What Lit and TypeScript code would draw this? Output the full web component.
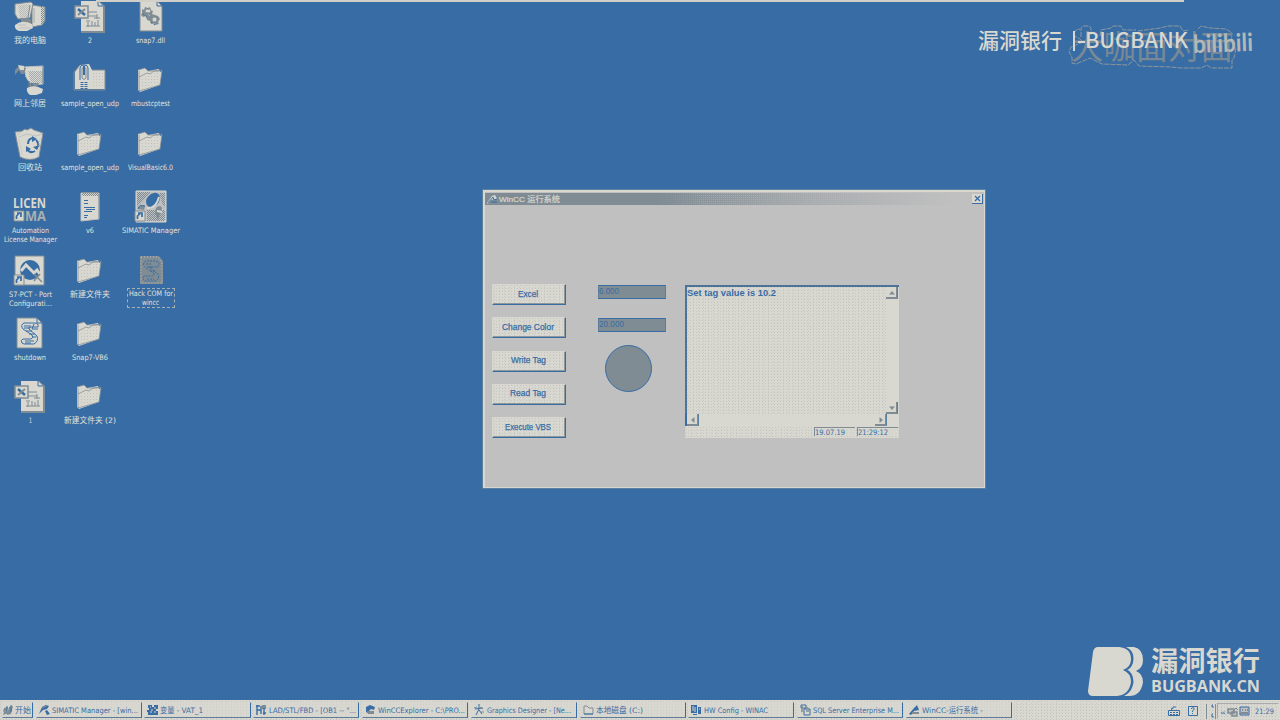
import { LitElement, html, svg, css } from "lit";
import { customElement, property } from "lit/decorators.js";

/* One line of text set to an exact measure. */
const line = (s: string, w: number, h = 9, base = 7, cls = "") => html`<svg class="line ${cls}" width=${w} height=${h}><text x="0" y=${base} textLength=${w} lengthAdjust="spacingAndGlyphs">${s}</text></svg>`;

const B = "#386ca4", G = "#808c94", S = "#c0c0c0", L = "#d8d8d0";

const defs = svg`<defs><pattern id="dots" width="3" height="3" patternUnits="userSpaceOnUse"><rect x="1" y="1" width="1" height="1" fill=${S}/></pattern>
<pattern id="mesh" width="2" height="2" patternUnits="userSpaceOnUse"><path d="M0 0h1v1h-1zM1 1h1v1h-1z" fill=${G}/></pattern></defs>`;

const shortcut = svg`<path d="M0 21h10v10H0z" fill=${L} stroke=${G}/><path d="M2.500 29v-3l3-3M3 23h4v4" fill="none" stroke=${B} stroke-width="1.700"/>`;

const sheet = svg`<path d="M7 1h18l6 5v27H7z" fill=${G}/><path d="M7 1h17l5 5v25H7z" fill=${L}/><path d="M24 1v5h5" fill="none" stroke=${B}/><path d="M13 12h10M13 16h10M23 14v5M20 18h6M12 21h4M14 22v5M12 26h14M18 21v5M21 22v4M24 20v6" stroke=${G} stroke-width="1"/><rect x="1" y="6" width="13" height="12" fill=${L} stroke=${G} stroke-width="1.500"/><path d="M4 9l7 6" stroke=${B} stroke-width="2.500"/><path d="M11 9l-7 6" stroke=${G} stroke-width="2"/>`;

const scroll = svg`<path d="M3 1h20l5 5v25H3z" fill=${L} stroke=${G}/><path d="M23 1v5h5" fill="none" stroke=${B}/><path d="M20 6H10q-4 2-1 6l9 6q2 3-1 4H9q-3 1-1 4l2 1h10q5-3 3-8l-8-7q-1-2 2-2h7q1-4-4-4z" fill=${L} stroke=${B}/><path d="M10 9h7M10 11h6M12 14h6M15 17h6M18 20h4M11 24h9M11 26h6M20 7l-2 5h6" stroke=${B} fill="none"/>`;

const icons: Record<string, unknown> = {
  computer: svg`<path d="M18 5l13 2v14l-3 4-10 2z" fill=${L} stroke=${G}/><path d="M27 7l4 1v13l-4 4z" fill="url(#mesh)"/><path d="M20 8v15" stroke=${S} stroke-width="2"/><path d="M1 4l16-2 2 2-3 14-12 1-3-5z" fill=${L} stroke=${G}/><path d="M4 5l12-1-1 13-9 1z" fill="url(#mesh)" opacity=".4"/><path d="M16 5l-2 13-8 1" stroke=${G} fill="none"/><path d="M7 19h10v5H7z" fill=${G}/><path d="M1 25q7-6 17-1l1 4-6 3H5q-5-2-4-6z" fill=${L}/><path d="M4 25h8M5 28h11" stroke=${S}/>`,
  network: svg`<path d="M10 4l19-1v18l-12 1-5-8z" fill=${L} stroke=${S}/><path d="M14 8h15v12l-12 1z" fill="url(#mesh)" opacity=".6"/><path d="M29 3v18" stroke=${G}/><path d="M1 12V7l4-4 7 2-2 6H7L5 7z" fill=${G}/><path d="M4 2l6 1v4H6z" fill=${L}/><path d="M14 20h11l-2 4h2l-3 3h-8z" fill=${G}/><path d="M15 18v8M18 20v5" stroke=${B}/><path d="M13 25q7-4 16 1l-1 4-6 2h-6q-4-3-3-7z" fill=${L}/>`,
  bin: svg`<path d="M1 5l7-1 3-2 2 1 4-2 3 2 9 3-4 24q-9 5-19 0z" fill=${L} stroke=${G}/><path d="M3 8l4-3M5 10l8-3 9 2 6-2" stroke=${S} fill="none"/><path d="M14 17q0-6 6-6M22 13q3 3 2 7M21 24q-5 3-8-2" stroke=${B} stroke-width="2" fill="none"/><path d="M18 9l5 3-5 3zM26 18l-3 5-4-3zM12 25v-6l5 3z" fill=${B}/><path d="M5 12l3 16M26 12l-3 16" stroke=${S} stroke-dasharray="1 1"/>`,
  license: svg`<text x="-1" y="18" class="big" textLength="33" lengthAdjust="spacingAndGlyphs">LICEN</text><text x="11" y="31" class="big dim" textLength="21" lengthAdjust="spacingAndGlyphs">MA</text>${shortcut}`,
  pct: svg`<path d="M1 2h29v29H1z" fill=${L} stroke=${G}/><circle cx="16" cy="16" r="10" fill=${B}/><path d="M7 17l5-6 8 8 3-3 5 7" fill="none" stroke=${L} stroke-width="3"/><path d="M20 20l8 8M26 20l-6 7" stroke=${G} stroke-width="1.500"/>${shortcut}`,
  script: scroll,
  sheet,
  zip: svg`<path d="M1 9l5-7 9-1 3 6h13v19H1z" fill=${L}/><path d="M0 27V9l6-7M18 7h13v20M0 27h31" fill="none" stroke=${G}/><path d="M17 9h13v15H17z" fill="url(#dots)"/><path d="M6 17V5q0-3 4-3t4 3v12" fill="none" stroke=${B}/><path d="M8 5h4v10q-2 3-4 0z" fill=${L} stroke=${G}/><path d="M10 3v9" stroke=${B} stroke-width="2"/><path d="M8 19v8M12 19v8" stroke=${B} stroke-width="3" stroke-dasharray="1 1"/>`,
  folder: svg`<path d="M3 7l7-2 3 3 11-2 1 3 2-1-2 14-20 7-2-2z" fill=${L}/><path d="M3 7l7-2 3 3h11M4 8v20l21-6 2-15" stroke=${G} stroke-opacity=".75" fill="none"/><path d="M6 15l11-4 9-2-2 11-18 6z" fill="url(#dots)"/><path d="M4 14l8-4 3 1 4-3 8-1" fill="none" stroke=${G} stroke-opacity=".75"/>`,
  notes: svg`<path d="M7 3h18v26l-18 2z" fill=${L} stroke=${S}/><path d="M8 2h17v4H8z" fill="url(#mesh)"/><path d="M25 5v24" stroke=${G}/><path d="M10 10.500h4M10 13.500h4M10 17.500h11M12 19.500h9M10 21.500h8M10 25.500h4M10 27.500h3" stroke=${B}/>`,
  gears: svg`<path d="M5 1h17l5 5v25H5z" fill=${L} stroke=${G}/><path d="M22 1v5h5" stroke=${B} fill="none"/><path d="M7 9l2 1 1-3 3 1 2-1 1 3 2 1-1 3 6 2 2 3-2 3 1 2-4 1-1-2-3 1-1-3-3-1-1-4-3 1-2-2 1-2z" fill=${G}/><path d="M11 10h4v2h-4zM18 18h3v3h-3zM13 14l2 2" fill=${L} stroke=${L} stroke-width=".6"/><path d="M8 14l5 4M16 22l4 3" stroke=${B} stroke-dasharray="2 1"/>`,
  simatic: svg`<path d="M1 1h30v31H1z" fill=${S} stroke=${L}/><path d="M2 2h14L2 17zM12 20h18v11H12zM24 3h6v15l-3-5z" fill="url(#mesh)"/><ellipse cx="18" cy="10" rx="6" ry="8" transform="rotate(42 18 10)" fill=${B}/><path d="M3 19q1-5 7-3l-1 4zM21 18q4-4 6 0l-4 12-3-7z" fill=${G}/><path d="M3 19q1-5 7-3" stroke=${B} fill="none"/><path d="M12 18q9 1 12-11M22 21l5 1" stroke=${L} fill="none" stroke-width="2"/>${shortcut}`,
  faded: svg`<path d="M5 2h19l4 5v23H5z" fill=${G}/><path d="M6 3h17l4 5v21H6z" fill="none" stroke=${S} stroke-dasharray="1 2"/><path d="M20 7h-9q-5 3 0 7l8 5q1 3-3 3H9q-2 3 1 5h11q4-3 2-7l-9-7h9q3-5-3-6z" fill=${G} stroke=${B} stroke-dasharray="2 1"/><path d="M11 10h6M12 13h6M15 17h5M12 25h7" stroke=${B} stroke-dasharray="2 1"/>`,
};

type Item = [string, [string, number][], boolean?];
const columns: Item[][] = [
  [["computer", [["我的电脑", 32]]], ["network", [["网上邻居", 32]]], ["bin", [["回收站", 24]]],
   ["license", [["Automation", 37], ["License Manager", 53]]], ["pct", [["S7-PCT - Port", 43], ["Configurati...", 43]]],
   ["script", [["shutdown", 32]]], ["sheet", [["1", 3]]]],
  [["sheet", [["2", 4]]], ["zip", [["sample_open_udp", 58]]], ["folder", [["sample_open_udp", 58]]], ["notes", [["v6", 8]]],
   ["folder", [["新建文件夹", 40]]], ["folder", [["Snap7-VB6", 36]]], ["folder", [["新建文件夹 (2)", 52]]]],
  [["gears", [["snap7.dll", 29]]], ["folder", [["mbustcptest", 39]]], ["folder", [["VisualBasic6.0", 45]]],
   ["simatic", [["SIMATIC Manager", 58]]], ["faded", [["Hack COM for", 44], ["wincc", 17]], true]],
];

@customElement("desktop-item")
class DesktopItem extends LitElement {
  @property() icon = "";
  @property({ attribute: false }) lines: [string, number][] = [];
  @property({ type: Boolean }) selected = false;
  static styles = css`
    :host { display: flex; flex-direction: column; align-items: center; height: 63.4px; font-family: "DejaVu Sans", "Noto Sans CJK SC", sans-serif; }
    .icon { display: block; overflow: visible; flex: none; }
    .label { display: flex; flex-direction: column; align-items: center; padding: 3px 1px 0; border: 1px solid transparent; margin-top: 0; }
    .selected { border: 1px dashed #a8b0b0; padding: 0 1px; margin-top: 2px; }
    .line { display: block; overflow: visible; font-size: 7.5px; fill: #e2e2da; }
    .big { font: 700 15px "Open Sans", sans-serif; fill: #d8d8d0; }
    .dim { fill: #a8b0b0; }
  `;
  render() {
    return html`<svg class="icon" width="32" height="32" viewBox="0 0 32 32">${defs}${icons[this.icon]}</svg>
      <div class="label ${this.selected ? "selected" : ""}">${this.lines.map(([s, w]) => line(s, w))}</div>`;
  }
}

@customElement("runtime-window")
class RuntimeWindow extends LitElement {
  static styles = css`
    :host { display: flex; flex-direction: column; width: 502px; height: 298px; box-sizing: border-box; background: #c0c0c0; border: 2px solid #d8d8d0; border-right-width: 1px; border-bottom-width: 1px; outline: 1px solid #5c80a0; font-family: "Liberation Sans", "Noto Sans CJK SC", sans-serif; }
    .line { display: block; overflow: visible; fill: #386ca4; font-size: 9px; }
    .title { height: 12px; display: flex; align-items: center; margin: 1px 0 0 0; padding: 0 1px 0 2px; gap: 2px; background: linear-gradient(90deg, #808c94 34%, transparent 44%), conic-gradient(at 1px 1px, transparent 75%, #c0c0c066 0) 0 0/2px 2px, linear-gradient(90deg, #808c94 0 34%, #a8acae 66%, #c0c0c0 94%); }
    .title .line { fill: #d8d8d0; margin-right: auto; font-size: 8px; stroke: #d8d8d0; stroke-width: .2px; }
    .close { width: 11px; height: 10px; box-sizing: border-box; background: #d8d8d0; border: solid #386ca4; border-width: 0 1px 1px 0; }
    svg { display: block; flex: none; }
    .body { flex: 1; display: flex; padding: 79px 0 0 7px; align-items: flex-start; }
    .buttons { display: flex; flex-direction: column; gap: 12.3px; width: 74px; }
    .button { height: 21px; box-sizing: border-box; display: flex; align-items: center; justify-content: center; padding: 0 2px 1px 0; border: solid; border-width: 1px; border-color: #d8d8d0 #386ca4 #386ca4 #d8d8d0; box-shadow: inset -1px -1px #8c989c; }
    .button .line { stroke: #386ca4; stroke-width: .25px; }
    .log .line { font-weight: 700; font-size: 9.5px; }
    .dither { background: conic-gradient(at 1px 1px, transparent 75%, #c4c4c2 0) 0 0/3px 3px, conic-gradient(at 1px 1px, transparent 75%, #c8c8c4 0) 1px 2px/5px 3px, #d8d8d0; }
    .fields { width: 68px; margin: 1px 0 0 32px; display: flex; flex-direction: column; gap: 19px; }
    .field { height: 14px; box-sizing: border-box; background: #808c94; border: 1px solid #386ca4; border-right-color: #607c98; border-left-color: #607c98; padding: 1px 0 0 0; }
    .circle { width: 45px; height: 45px; border: 1px solid #386ca4; background: #808c94; border-radius: 50%; margin: -6px 0 0 7px; }
    .panel { width: 214px; height: 153px; margin: 1px 0 0 19px; display: flex; flex-direction: column; background: #d8d8d0; }
    .log { height: 129px; display: flex; box-sizing: border-box; border: solid #4c7498; border-width: 2px 0 0 2px; }
    .text { flex: 1; padding: 1px 0 0 0; }
    .vbar { width: 12px; display: flex; flex-direction: column; justify-content: space-between; margin-right: 1px; }
    .hbar { height: 12px; display: flex; justify-content: space-between; border-left: 2px solid #386ca4; margin-right: 12px; }
    .status { flex: 1; display: flex; justify-content: flex-end; gap: 2px; margin-top: 1px; padding: 0 1px 0 0; }
    .cell { height: 9px; width: 41px; border: solid #808c94; border-width: 1px 0 0 1px; box-sizing: border-box; background: #d8d8d088; }
    .cell .line { font-family: "DejaVu Sans", sans-serif; font-size: 7.5px; }
  `;
  arrow(r: number) {
    return html`<svg width="12" height="12" viewBox="0 0 12 12"><path d="M0 0h12v12H0z" fill=${L}/><path d="M11 0v11H0" fill="none" stroke=${G} stroke-width="2"/><path d="M11.500 0v12" stroke="#5c80a0"/><path d="M6 4l3 3.500h-6z" fill=${G} transform="rotate(${r} 6 6)"/></svg>`;
  }
  render() {
    const buttons: [string, number][] = [["Excel", 20], ["Change Color", 52], ["Write Tag", 35], ["Read Tag", 36], ["Execute VBS", 46]];
    return html`
      <div class="title">
        <svg width="10" height="10" viewBox="0 0 10 10"><path d="M0 9l5-7 3-1 2 4-6 1-3 4z" fill=${L}/><path d="M1 9l5-6 1 3 3-1M4 8h6" stroke=${B} fill="none"/></svg>
        ${line("WinCC 运行系统", 61)}
        <div class="close"><svg width="10" height="9" viewBox="0 0 10 9"><path d="M3 2l5 5M8 2L3 7" stroke=${B} stroke-width="1.300"/></svg></div>
      </div>
      <div class="body">
        <div class="buttons">${buttons.map(([s, w]) => html`<div class="button dither">${line(s, w)}</div>`)}</div>
        <div class="fields">
          <div class="field">${line("6.000", 20)}</div>
          <div class="field">${line("20.000", 25)}</div>
          <div class="circle"></div>
        </div>
        <div class="panel">
          <div class="log"><div class="text dither">${line("Set tag value is 10.2", 89, 10, 8)}</div><div class="vbar">${this.arrow(0)}${this.arrow(180)}</div></div>
          <div class="hbar">${this.arrow(-90)}${this.arrow(90)}</div>
          <div class="status dither"><div class="cell">${line("19.07.19", 30)}</div><div class="cell">${line("21:29:12", 30)}</div></div>
        </div>
      </div>`;
  }
}

const glyphs: Record<string, unknown> = {
  start: svg`<path d="M1 4l4-1-1 4-4 1zM6 3l4-1-1 4-4 1zM1 8l3-1-1 3-3 1zM5 7l4-1-1 4-4 1z" fill=${G}/><path d="M4 2v8M8 1v7" stroke=${B}/>`,
  simatic: svg`<path d="M0 10l3-7 4-2 3 1-2 3-4 1zM6 7l2-1 3 4-3 1z" fill=${B}/><path d="M3 4l5-2" stroke=${G}/>`,
  table: svg`<path d="M1 1h4v2h2V1h4v4H9v2h2v4H1V8H0V6h2V4H1z" fill=${B}/><path d="M3 3h1M7 4h2M3 8h2M7 8h2M5 5v2" stroke=${L}/>`,
  ladder: svg`<path d="M1 1v10M0 2h4M1 6h4M5 2v8M8 3v8M6 4h4M7 9h3" stroke=${B} stroke-width="1.400"/><path d="M6 1h4v3H6z" fill=${G}/>`,
  explorer: svg`<path d="M1 3l4-2 5 2-1 3-3-1-2 2 3 1-2 2-4-2z" fill=${B}/><path d="M2 7h7v3H3z" fill=${G}/>`,
  designer: svg`<path d="M1 5l8-1M5 0v5L2 11M5 6l3 4" stroke=${B} fill="none"/><path d="M0 4l3-1M7 8h3M6 3l3 2" stroke=${G}/>`,
  disk: svg`<path d="M1 2h3l2 2h4v6H1z" fill=${L} stroke=${G}/><path d="M1 10h9" stroke=${B}/>`,
  hw: svg`<path d="M0 1h6v8H0zM7 3h3v7H7zM2 10h4v1H2z" fill=${B}/><path d="M2 2v5M4 3v5M8 5h1" stroke=${L}/>`,
  sql: svg`<path d="M1 1h5v3H1zM4 5h6v6H4z" fill=${L} stroke=${B}/><path d="M2 1v7M6 3l3 2M6 7h3" stroke=${G} stroke-width="1.500"/>`,
  wincc: svg`<path d="M0 10l5-6 3-3 2 5-5 1-3 4z" fill=${B}/><path d="M3 9h7" stroke=${G} stroke-width="2"/>`,
};

@customElement("task-bar")
class TaskBar extends LitElement {
  static styles = css`
    :host { display: flex; height: 20px; align-items: flex-start; box-sizing: border-box; padding: 1px 1px 0 2px; gap: 2.7px; font-family: "DejaVu Sans", "Noto Sans CJK SC", sans-serif;
      background: conic-gradient(at 1px 1px, transparent 75%, #c4c4c2 0) 0 0/3px 3px, conic-gradient(at 1px 1px, transparent 75%, #c8c8c4 0) 1px 2px/5px 3px, #d8d8d0; border-top: 1px solid #d8d8d0; }
    svg { display: block; flex: none; }
    .line { overflow: visible; font-size: 7.5px; fill: #386ca4; }
    .task { width: 106.1px; height: 16px; box-sizing: border-box; display: flex; align-items: center; gap: 2px; padding-left: 2px; background: #d8d8d099; border: solid; border-color: #d8d8d0 #386ca4 #607c98 #d8d8d0; border-width: 1px 1.500px 1.500px 1px; }
    .start { width: 31px; padding-left: 0; gap: 1px; }
    .tray { margin-left: auto; display: flex; align-items: center; height: 18px; gap: 7px; }
    .clock { display: flex; align-items: center; gap: 1px; height: 14px; border: 1px solid #a8acae; border-right-color: #d8d8d0; border-bottom-color: #d8d8d0; padding: 0 4px 0 2px; margin-left: -6px; }
    .clock .line:last-child { margin-left: 4px; }
  `;
  render() {
    const tasks: [string, string, number][] = [
      ["simatic", "SIMATIC Manager - [win...", 86], ["table", "变量 - VAT_1", 43], ["ladder", "LAD/STL/FBD  - [OB1 -- \"...", 87],
      ["explorer", "WinCCExplorer - C:\\PRO...", 87], ["designer", "Graphics Designer - [Ne...", 84], ["disk", "本地磁盘 (C:)", 47],
      ["hw", "HW Config - WINAC", 64], ["sql", "SQL Server Enterprise M...", 86], ["wincc", "WinCC-运行系统 -", 61]];
    const glyph = (k: string) => html`<svg width="11" height="12" viewBox="0 0 11 12">${glyphs[k]}</svg>`;
    return html`<div class="task start">${glyph("start")}${line("开始", 16)}</div>
      ${tasks.map(([k, s, w]) => html`<div class="task">${glyph(k)}${line(s, w)}</div>`)}
      <div class="tray">
        <svg width="12" height="12" viewBox="0 0 12 12"><path d="M.5 5.500h11v5H.5zM3.500 5V3.500H5V2h3" fill=${L} stroke=${B}/><path d="M2 7.500h8M2 9.500h8" fill="none" stroke=${B} stroke-dasharray="2 1"/></svg>
        <svg width="12" height="12" viewBox="0 0 12 12"><path d="M1.500 1.500h9v9h-9z" fill=${L} stroke=${B}/><path d="M4 4q1-2 3-1 1 1-1.500 3v1M5.500 8v1" fill="none" stroke=${B}/></svg>
        <svg width="10" height="15" viewBox="0 0 10 15"><path d="M.5 0v15M9.500 0v15" stroke=${G}/><path d="M7 1H6v2h2M7 10H6v3h2" fill="none" stroke=${B}/></svg>
        <div class="clock">${line("«", 6, 9, 7.5)}
          <svg width="11" height="11" viewBox="0 0 11 11"><path d="M1 3h6v4H1zM5 6h5v4H5z" fill=${S} stroke=${G} stroke-width="1.500"/><path d="M3 9l6-7 2 2" stroke=${G} fill="none"/></svg>
          <svg width="11" height="11" viewBox="0 0 11 11"><path d="M1 1h9v8H1z" fill=${S} stroke=${B}/><path d="M2 7h7M3 4h1M6 4h1M8 4h1" stroke=${G} stroke-width="2"/></svg>
          ${line("21:29", 19)}</div>
      </div>`;
  }
}

@customElement("app-root")
class AppRoot extends LitElement {
  static styles = css`
    :host { display: flex; flex-direction: column; width: 1280px; height: 720px; overflow: hidden; background: #386ca4; position: relative; }
    .desktop { flex: 1; display: flex; min-height: 0; }
    .column { width: 60.3px; }
    .edge { position: absolute; left: 96px; top: 0; width: 1088px; height: 2px; background: #d0d0c8; }
    runtime-window { position: absolute; left: 483px; top: 190px; }
    .credit { position: absolute; left: 960px; top: 10px; }
    .brand { position: absolute; left: 1084px; top: 640px; }
    text { font-family: "Noto Sans CJK SC", sans-serif; }
    .head { font-size: 21px; font-weight: 500; fill: #d8d8d0; }
    .show { font-size: 33px; font-weight: 400; fill: #808c94; fill-opacity: .9; }
    .site { font: 700 25px "Lato", sans-serif; fill: #b4b8b6; }
    .cn { font-size: 27px; font-weight: 700; fill: #d8d8d0; }
    .en { font: 700 16px "Open Sans", sans-serif; fill: #d8d8d0; }
  `;
  render() {
    return html`
      <div class="desktop">${columns.map(c => html`<div class="column">${c.map(([icon, lines, sel]) => html`<desktop-item .icon=${icon} .lines=${lines} .selected=${!!sel}></desktop-item>`)}</div>`)}</div>
      <task-bar></task-bar>
      <div class="edge"></div>
      <runtime-window></runtime-window>
      <svg class="credit" width="320" height="70">
        <path d="M121 28v-9l2-2h6l2 2v7M140 27l1-6 10-2 2-2h8l2 4h13M178 22l22-3 8-2h12l3 5 6-1M238 20l3-3 9 2 16 1 6 4-1 10 5 5-2 10-2 2v8h-21l-4-3-6 3h-20l-10-1-32-1-5-6-6 5-26-1-12-6-14 6-4-1v-6l-3-5 2-5 12-5-3-3-7-4 3-5 4-1" transform="translate(0 -1)" fill="none" stroke="#8c989e" stroke-linejoin="round" stroke-dasharray="5 1"/>
        <text class="show" x="111" y="49" textLength="162" lengthAdjust="spacingAndGlyphs">大咖面对面</text>
        <text class="head" x="18" y="38" textLength="84" lengthAdjust="spacingAndGlyphs">漏洞银行</text>
        <path d="M114 21v20" stroke=${L} stroke-width="2"/><path d="M118 32h7" stroke=${L} stroke-width="2"/>
        <text class="head" x="125" y="38" textLength="103" lengthAdjust="spacingAndGlyphs">BUGBANK</text>
        <text class="site" x="233" y="42" textLength="60" lengthAdjust="spacingAndGlyphs" transform="rotate(-2 260 35)">bilibili</text>
      </svg>
      <svg class="brand" width="190" height="60">
        <path d="M40 7h10q9 2 9 13 0 8-7 11 7 3 7 11-2 14-14 14H35z" fill=${L}/>
        <path d="M14 7h21q13 1 13 12 0 8-8 11 8 3 8 12-2 13-15 14H9q-5 0-5-5L9 12q1-5 5-5z" fill="none" stroke=${B} stroke-width="3"/>
        <path d="M14 7h21q12 1 12 12 0 8-8 11 8 3 8 12-2 13-14 14H9q-5 0-5-5L9 12q1-5 5-5z" fill=${L}/>
        <text class="cn" x="67" y="31" textLength="109" lengthAdjust="spacingAndGlyphs">漏洞银行</text>
        <text class="en" x="67" y="52" textLength="109" lengthAdjust="spacingAndGlyphs">BUGBANK.CN</text>
      </svg>`;
  }
}
